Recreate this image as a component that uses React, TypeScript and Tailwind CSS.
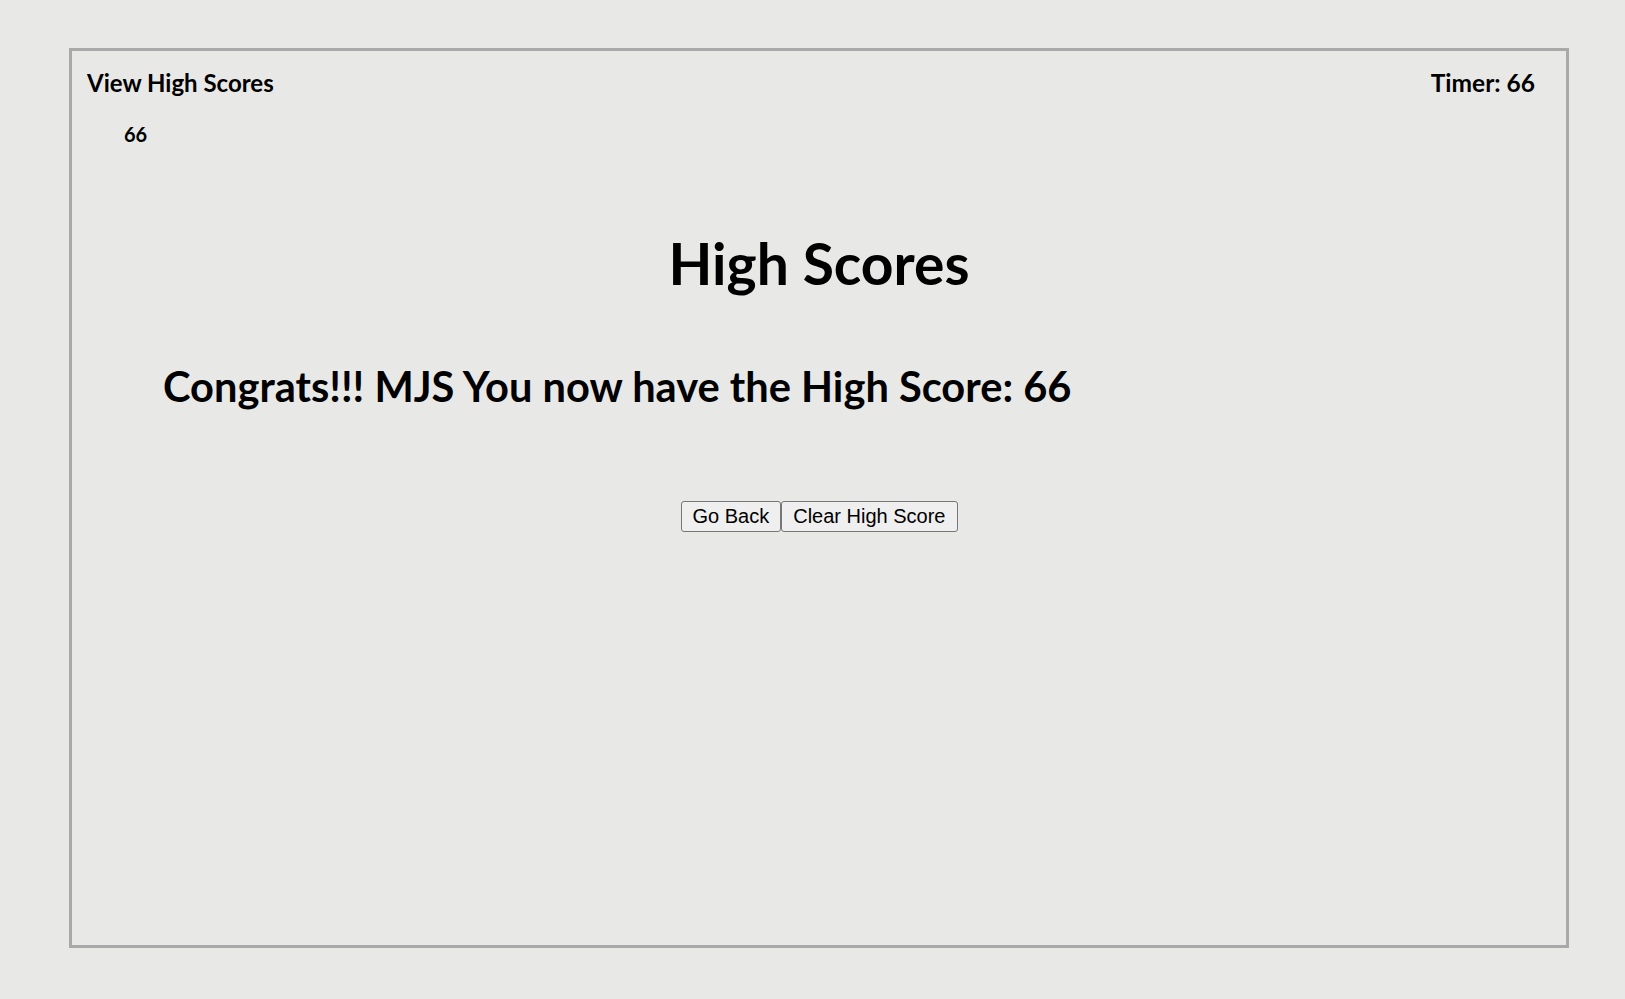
export default function App() {
  const score = 66;
  const initials = "MJS";

  return (
    <div className="min-h-screen bg-[#e8e8e6] pt-[48px] pl-[69px] font-['Lato','Open_Sans',sans-serif] text-black">
      <div className="w-[1500px] h-[900px] border-[3px] border-[#a9a9a9] flex flex-col">
        <header className="flex justify-between items-start pt-[17px] pl-[15px] pr-[31px]">
          <div className="flex flex-col">
            <span className="text-[24px] font-bold leading-[30px]">View High Scores</span>
            <span className="text-[20px] font-bold leading-[24px] pl-[37px] mt-[24px]">{score}</span>
          </div>
          <span className="text-[24.5px] font-bold leading-[30px]">Timer: {score}</span>
        </header>

        <h1 className="text-center text-[57px] font-bold leading-[60px] mt-[87px]">High Scores</h1>

        <h2 className="text-[41.6px] font-bold leading-[46px] pl-[91px] mt-[70px]">
          Congrats!!! {initials} You now have the High Score: {score}
        </h2>

        <div className="flex justify-center mt-[92px] font-['Liberation_Sans',Arial,sans-serif]">
          <button className="h-[31px] px-[11px] text-[20px] leading-[23px] bg-[#efefef] border border-[#767676] rounded-[3px]">
            Go Back
          </button>
          <button className="h-[31px] px-[11px] text-[20px] leading-[23px] bg-[#efefef] border border-[#767676] rounded-[3px]">
            Clear High Score
          </button>
        </div>
      </div>
    </div>
  );
}
